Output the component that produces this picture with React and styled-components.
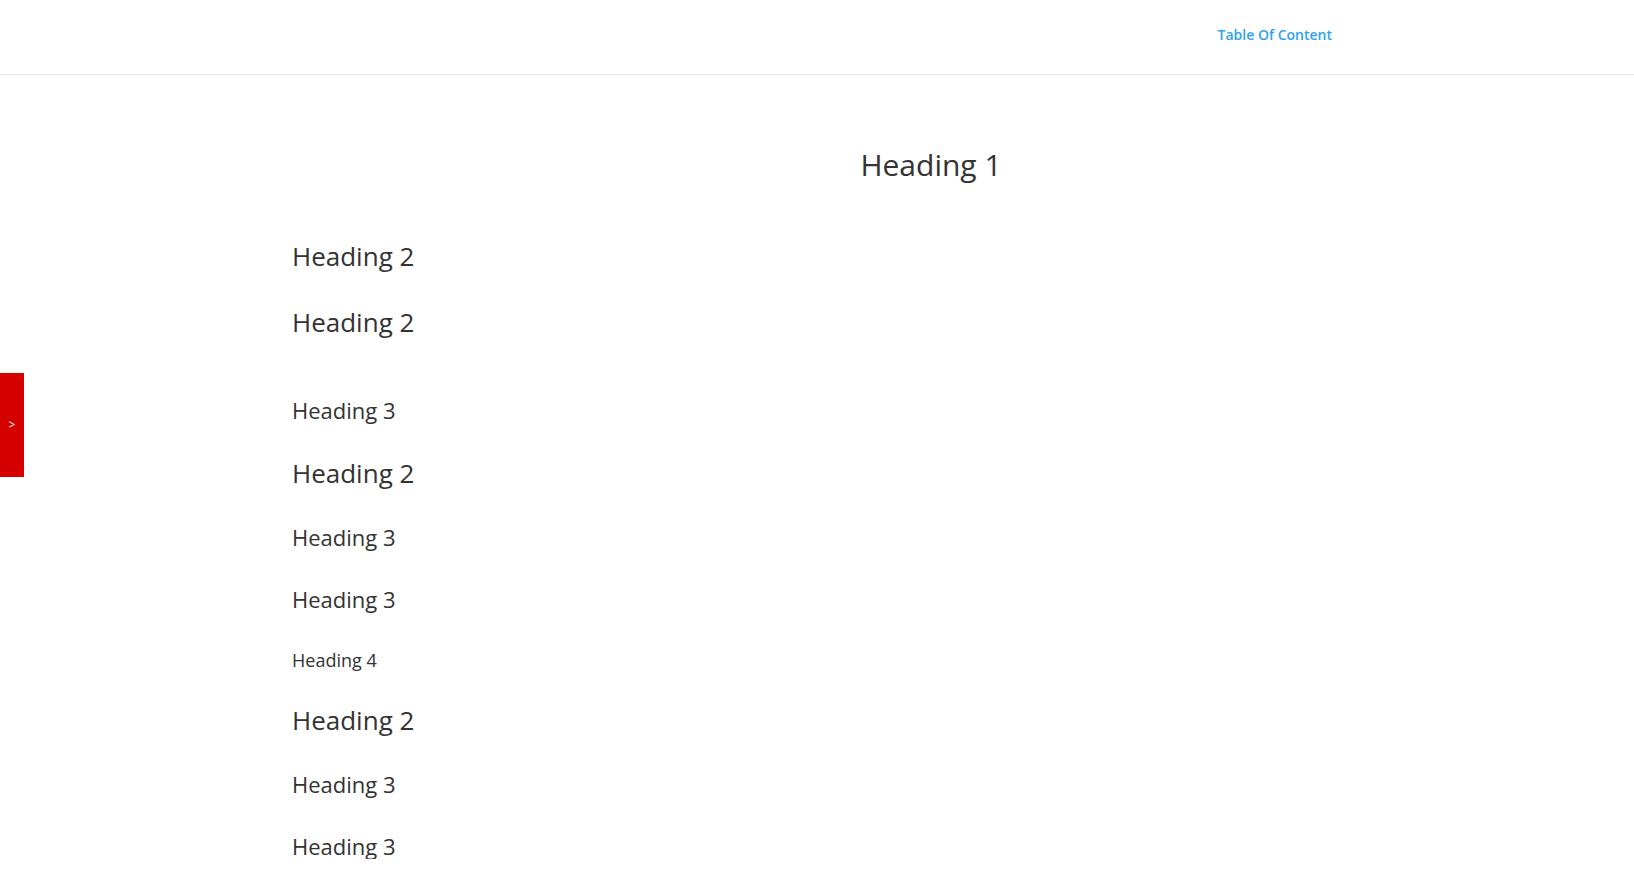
import React from "react"
import styled, { createGlobalStyle } from "styled-components"

const GlobalStyle = createGlobalStyle`
  html, body {
    margin: 0;
    padding: 0;
    background: #fff;
  }
  body {
    font-family: "Open Sans", Arial, sans-serif;
    color: #666;
  }
`

const Header = styled.header`
  height: 73px;
  border-bottom: 1px solid rgba(0, 0, 0, 0.1);
  display: flex;
  align-items: center;
  justify-content: flex-end;
  padding-right: 302px;
  padding-top: 1px;
  box-sizing: content-box;
`

const NavLink = styled.a`
  font-size: 14px;
  font-weight: 600;
  color: #2ea3f2;
  text-decoration: none;
  line-height: 1;
  margin-top: -5px;
`

const Content = styled.main`
  padding: 0 64px 0 292px;
`

const Title = styled.h1`
  margin: 72px 0 0;
  font-size: 30px;
  font-weight: 400;
  line-height: 1.2;
  color: #333;
  text-align: center;
`

const sizes = { 2: 26, 3: 22, 4: 18 }

const Heading = styled.div`
  margin-top: ${props => props.$gap}px;
  font-size: ${props => sizes[props.$level]}px;
  font-weight: 400;
  line-height: 1.2;
  color: #333;
`

const SideTab = styled.button`
  position: fixed;
  left: 0;
  top: 373px;
  width: 24px;
  height: 104px;
  border: none;
  padding: 0;
  background: #d40000;
  color: #fff;
  font-family: "Open Sans", Arial, sans-serif;
  font-size: 12px;
  line-height: 1;
  display: flex;
  align-items: center;
  justify-content: center;
  cursor: pointer;
`

const headings = [
  { level: 2, gap: 58 },
  { level: 2, gap: 35 },
  { level: 3, gap: 59 },
  { level: 2, gap: 34 },
  { level: 3, gap: 35 },
  { level: 3, gap: 36 },
  { level: 4, gap: 37 },
  { level: 2, gap: 34 },
  { level: 3, gap: 34 },
  { level: 3, gap: 36 },
]

const App = () => {
  return (
    <>
      <GlobalStyle />
      <Header>
        <NavLink href="#">Table Of Content</NavLink>
      </Header>
      <Content>
        <Title>Heading 1</Title>
        {headings.map((h, i) => (
          <Heading key={i} $level={h.level} $gap={h.gap}>
            Heading {h.level}
          </Heading>
        ))}
      </Content>
      <SideTab>&gt;</SideTab>
    </>
  )
}

export default App
